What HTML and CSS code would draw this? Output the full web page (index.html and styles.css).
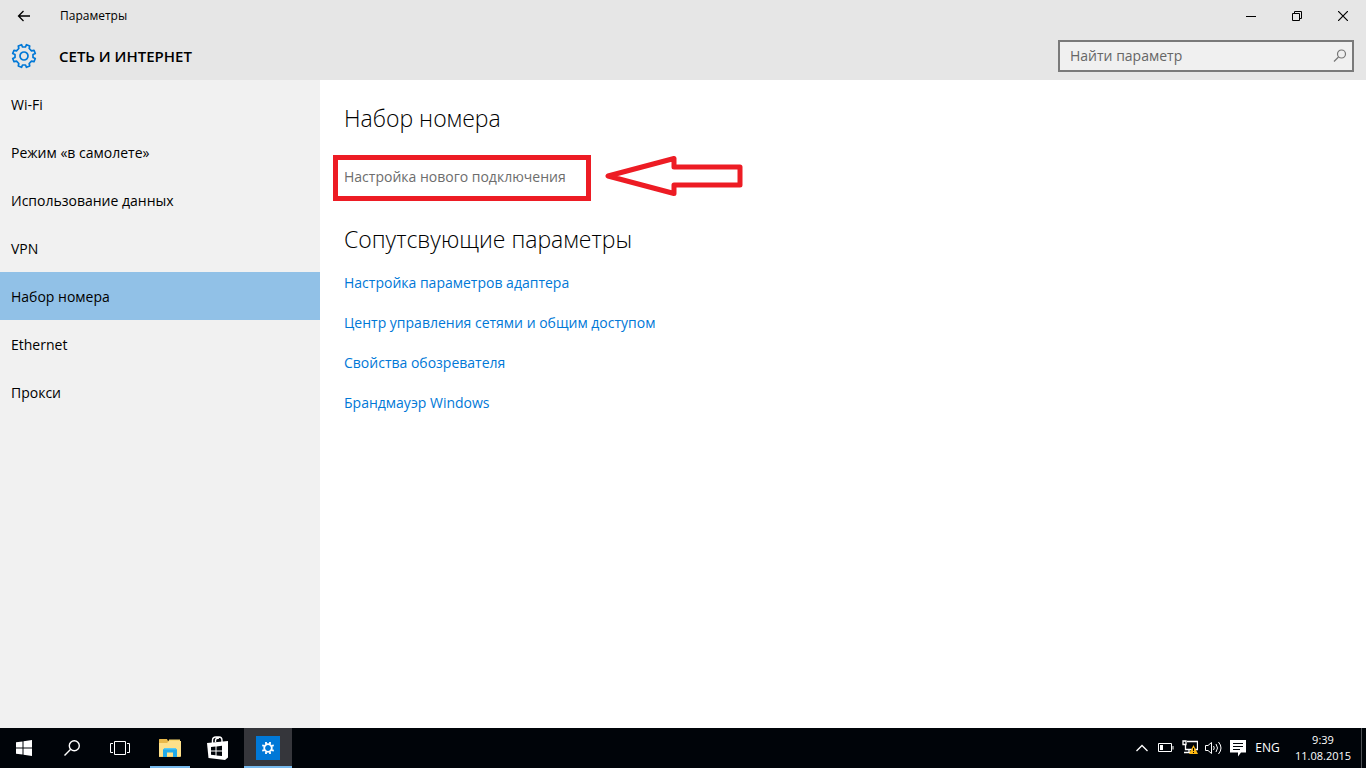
FILE: index.html
```html
<!DOCTYPE html>
<html lang="ru">
<head>
<meta charset="utf-8">
<title>Параметры</title>
<link rel="stylesheet" href="styles.css">
</head>
<body>
<div class="window">
  <header class="header">
    <div class="titlebar">
      <button class="back" type="button" aria-label="Назад">
        <svg width="14" height="12" viewBox="0 0 14 12"><path d="M13 6H1.500M6.500 1l-5 5 5 5" fill="none" stroke="#000" stroke-width="1.300"/></svg>
      </button>
      <span class="app-name">Параметры</span>
      <div class="window-buttons">
        <button type="button" aria-label="Свернуть"><svg width="10" height="10"><path d="M0 5.500h10" stroke="#000"/></svg></button>
        <button type="button" aria-label="Восстановить"><svg width="10" height="10"><path d="M.5 2.500h7v7h-7zM2.500 2.500v-2h7v7h-2" fill="none" stroke="#000"/></svg></button>
        <button type="button" aria-label="Закрыть"><svg width="10" height="10"><path d="M0 0l10 10M10 0L0 10" stroke="#000" stroke-width="1.200"/></svg></button>
      </div>
    </div>
    <div class="section-bar">
      <svg class="gear" width="26" height="26" viewBox="-13 -13 26 26" fill="none" stroke="#0078d7" stroke-width="1.700" stroke-linejoin="round">
        <path d="M-1.500 -9L-2.500 -11.300L-5.700 -10L-5.200 -7.500L-7.500 -5.200L-10 -5.700L-11.300 -2.500L-9 -1.500V1.500L-11.300 2.500L-10 5.700L-7.500 5.200L-5.200 7.500L-5.700 10L-2.500 11.300L-1.500 9H1.500L2.500 11.300L5.700 10L5.200 7.500L7.500 5.200L10 5.700L11.300 2.500L9 1.500V-1.500L11.300 -2.500L10 -5.700L7.500 -5.200L5.200 -7.500L5.700 -10L2.500 -11.300L1.500 -9Z"/>
        <circle r="4"/>
      </svg>
      <h1 class="section-title">СЕТЬ И ИНТЕРНЕТ</h1>
      <label class="search">
        <input type="text" placeholder="Найти параметр" aria-label="Найти параметр">
        <svg width="14" height="14" viewBox="0 0 14 14" fill="none" stroke="#767676" stroke-width="1.200"><circle cx="8.500" cy="5" r="4"/><path d="M5.500 8L1 12.500"/></svg>
      </label>
    </div>
  </header>
  <div class="body">
    <nav class="sidebar">
      <a href="#">Wi-Fi</a>
      <a href="#">Режим «в самолете»</a>
      <a href="#">Использование данных</a>
      <a href="#">VPN</a>
      <a href="#" class="active" aria-current="page">Набор номера</a>
      <a href="#">Ethernet</a>
      <a href="#">Прокси</a>
    </nav>
    <main class="content">
      <h2>Набор номера</h2>
      <div class="marked">
        <a class="new-connection" href="#">Настройка нового подключения</a>
        <span class="mark-frame"></span>
        <svg class="mark-arrow" width="138" height="42" viewBox="0 0 138 42"><path d="M3 21L69 3.500V12H135V30H69V38.500Z" fill="none" stroke="#ed1c24" stroke-width="5" stroke-linejoin="round"/></svg>
      </div>
      <h2>Сопутсвующие параметры</h2>
      <ul class="links">
        <li><a href="#">Настройка параметров адаптера</a></li>
        <li><a href="#">Центр управления сетями и общим доступом</a></li>
        <li><a href="#">Свойства обозревателя</a></li>
        <li><a href="#">Брандмауэр Windows</a></li>
      </ul>
    </main>
  </div>
  <footer class="taskbar">
    <button class="task" type="button" aria-label="Пуск"><svg width="16" height="16" fill="#fff"><path d="M0 2.300L6.500 1.400V7.500H0zM7.500 1.200L16 0V7.500H7.500zM0 8.500H6.500V14.600L0 13.700zM7.500 8.500H16V16L7.500 14.800z"/></svg></button>
    <button class="task" type="button" aria-label="Поиск"><svg width="16" height="16" fill="none" stroke="#fff" stroke-width="1.400"><circle cx="10.300" cy="5.700" r="5"/><path d="M6.700 9.300L.5 15.500"/></svg></button>
    <button class="task" type="button" aria-label="Представление задач"><svg width="20" height="14" fill="none" stroke="#fff"><path d="M4.500 .5h11v13h-11zM3 2.500H.5v9H3M17 2.500h2.500v9H17"/></svg></button>
    <button class="task running" type="button" aria-label="Проводник">
      <svg width="22" height="20" viewBox="0 0 22 20"><path d="M0 1.500Q0 1 .5 1H8l1 2h12.500v16H0z" fill="#e8b84a"/><path d="M0 5h8l2-2h12v15.500H0z" fill="#fde08a"/><path d="M10 1.500h11V3H9.500z" fill="#f8d66d"/><path d="M4 11.500L6 10h10l2 1.500V19h-4v-4.500H8V19H4z" fill="#1fa9e8"/><path d="M4 11.500L6 10h10l2 1.500z" fill="#55c8f5"/></svg>
    </button>
    <button class="task" type="button" aria-label="Магазин">
      <svg width="22" height="24" viewBox="0 0 22 24"><path d="M5.500 7V4.500Q5.500 1 9 1h3Q15 1 15 4.500V6M8.500 6V4.500Q8.500 2 12 2" fill="none" stroke="#fff" stroke-width="1.400"/><path d="M0 7L21 5V21.500L18 24L1.500 22z" fill="#fff"/><path d="M4 11L8.500 10.500V14.500H4zM9.500 10.400L15 9.700V14.500H9.500zM4 15.500H8.500V19.300L4 18.800zM9.500 15.500H15V20L9.500 19.400z" fill="#000409"/></svg>
    </button>
    <button class="task running current" type="button" aria-label="Параметры">
      <svg width="24" height="24" viewBox="-12 -12 24 24"><path d="M-12-12h24v24h-24z" fill="#0078d7"/><circle r="3.800" fill="none" stroke="#fff" stroke-width="1.800"/><g stroke="#fff" stroke-width="1.800"><path d="M-2-4V-6M2-4V-6M-2 4V6M2 4V6M-3.500-2.200L-5.800-2.600M-3.500 2.200L-5.800 2.600M3.500-2.200L5.800-2.600M3.500 2.200L5.800 2.600"/></g></svg>
    </button>
    <div class="tray">
      <button type="button" aria-label="Скрытые значки"><svg width="14" height="10"><path d="M1.500 8L7 2.500 12.500 8" fill="none" stroke="#fff" stroke-width="1.300"/></svg></button>
      <button type="button" aria-label="Батарея"><svg width="16" height="10"><path d="M.5 .5h13v8H.5zM15 3v3.500" fill="none" stroke="#fff"/><path d="M2 2h3v5H2z" fill="#fff"/></svg></button>
      <button type="button" aria-label="Сеть"><svg width="16" height="16"><path d="M5 1.500h10.500v8H3.500V5M1 1h3v3.500H1zM7 9.500v3M2 12.500h7" fill="none" stroke="#fff" stroke-width="1.300"/><path d="M11.500 5L16 14H7z" fill="#fdb913"/><path d="M11.500 8v3M11.500 12v1" stroke="#000"/></svg></button>
      <button type="button" aria-label="Громкость"><svg width="18" height="14" fill="none" stroke="#fff"><path d="M.5 4.500H3L6.500 1.500v11L3 9.500H.5zM8.500 5q1.500 2 0 4M11 3q3 4 0 8M13.500 1q5 6 0 12"/></svg></button>
      <button type="button" aria-label="Уведомления"><svg width="16" height="17"><path d="M0 0h16v12.500h-5L8 16.500V12.500H0z" fill="#fff"/><path d="M3 3.500h10M3 6.500h10M3 9.500h7" stroke="#000409"/></svg></button>
      <button class="lang" type="button">ENG</button>
      <button class="clock" type="button"><time>9:39</time><time>11.08.2015</time></button>
      <button class="show-desktop" type="button" aria-label="Показать рабочий стол"></button>
    </div>
  </footer>
</div>
</body>
</html>
```
FILE: styles.css
```css
* { box-sizing: border-box; }
body {
  margin: 0;
  font: 14px/20px "Open Sans", "Noto Sans", sans-serif;
  color: #000;
  background: #fff;
}
h1, h2, ul { margin: 0; padding: 0; }
a { text-decoration: none; color: inherit; }
svg { display: block; flex: none; }
button {
  display: flex;
  align-items: center;
  justify-content: center;
  margin: 0;
  padding: 0;
  border: 0;
  background: none;
  color: inherit;
  font: inherit;
}
.window { display: flex; flex-direction: column; min-height: 100vh; }

.header { background: #e6e6e6; }
.titlebar { display: flex; align-items: center; height: 32px; }
.back { width: 48px; height: 32px; }
.app-name { margin-left: 12px; font-size: 12px; }
.window-buttons { display: flex; margin-left: auto; }
.window-buttons button { width: 46px; height: 32px; }
.section-bar { display: flex; align-items: center; height: 48px; padding: 0 12px 0 11px; }
.section-title { margin-left: 22px; font-size: 15px; line-height: 20px; font-weight: 600; }
.search {
  display: flex;
  align-items: center;
  width: 296px;
  height: 32px;
  margin-left: auto;
  padding: 0 5px 0 10px;
  border: 2px solid #7a7a7a;
  background: #f0f0f0;
}
.search input {
  flex: 1;
  min-width: 0;
  padding: 0;
  border: 0;
  outline: 0;
  background: none;
  font: inherit;
}
.search input::placeholder { color: #666; opacity: 1; }

.body { display: flex; flex: 1; }
.sidebar { width: 320px; flex: none; background: #f1f1f1; }
.sidebar a { display: flex; align-items: center; height: 48px; padding: 2px 0 0 11px; }
.sidebar .active { background: #91c1e7; }
.content { flex: 1; padding: 22px 24px; }
.content h2 { font-size: 23px; line-height: 32px; font-weight: 300; }
.marked { position: relative; width: max-content; margin: 33px 0 36px; }
.new-connection { display: block; color: #6d6d6d; }
.mark-frame {
  position: absolute;
  inset: -12px -25px -14px -11px;
  border: 5px solid #ed1c24;
  pointer-events: none;
}
.mark-arrow { position: absolute; top: -12px; left: 261px; }
.links { display: grid; gap: 20px; margin-top: 18px; list-style: none; color: #0078d7; }

.taskbar { display: flex; height: 40px; background: #000409; color: #fff; }
.task { width: 48px; height: 40px; border: 0 solid transparent; border-width: 2px 0; }
.running { width: 40px; margin: 0 4px 0 6px; border-bottom-color: #76b9ed; }
.current { width: 48px; margin: 0 0 0 2px; background: #35363b; }
.tray { display: flex; margin-left: auto; font-size: 12px; line-height: 16px; }
.tray button { width: 24px; }
.tray .lang { width: 35px; }
.tray .clock { width: 76px; flex-direction: column; font-size: 11px; }
.tray .show-desktop { width: 5px; border-left: 1px solid #4d5055; }
```
